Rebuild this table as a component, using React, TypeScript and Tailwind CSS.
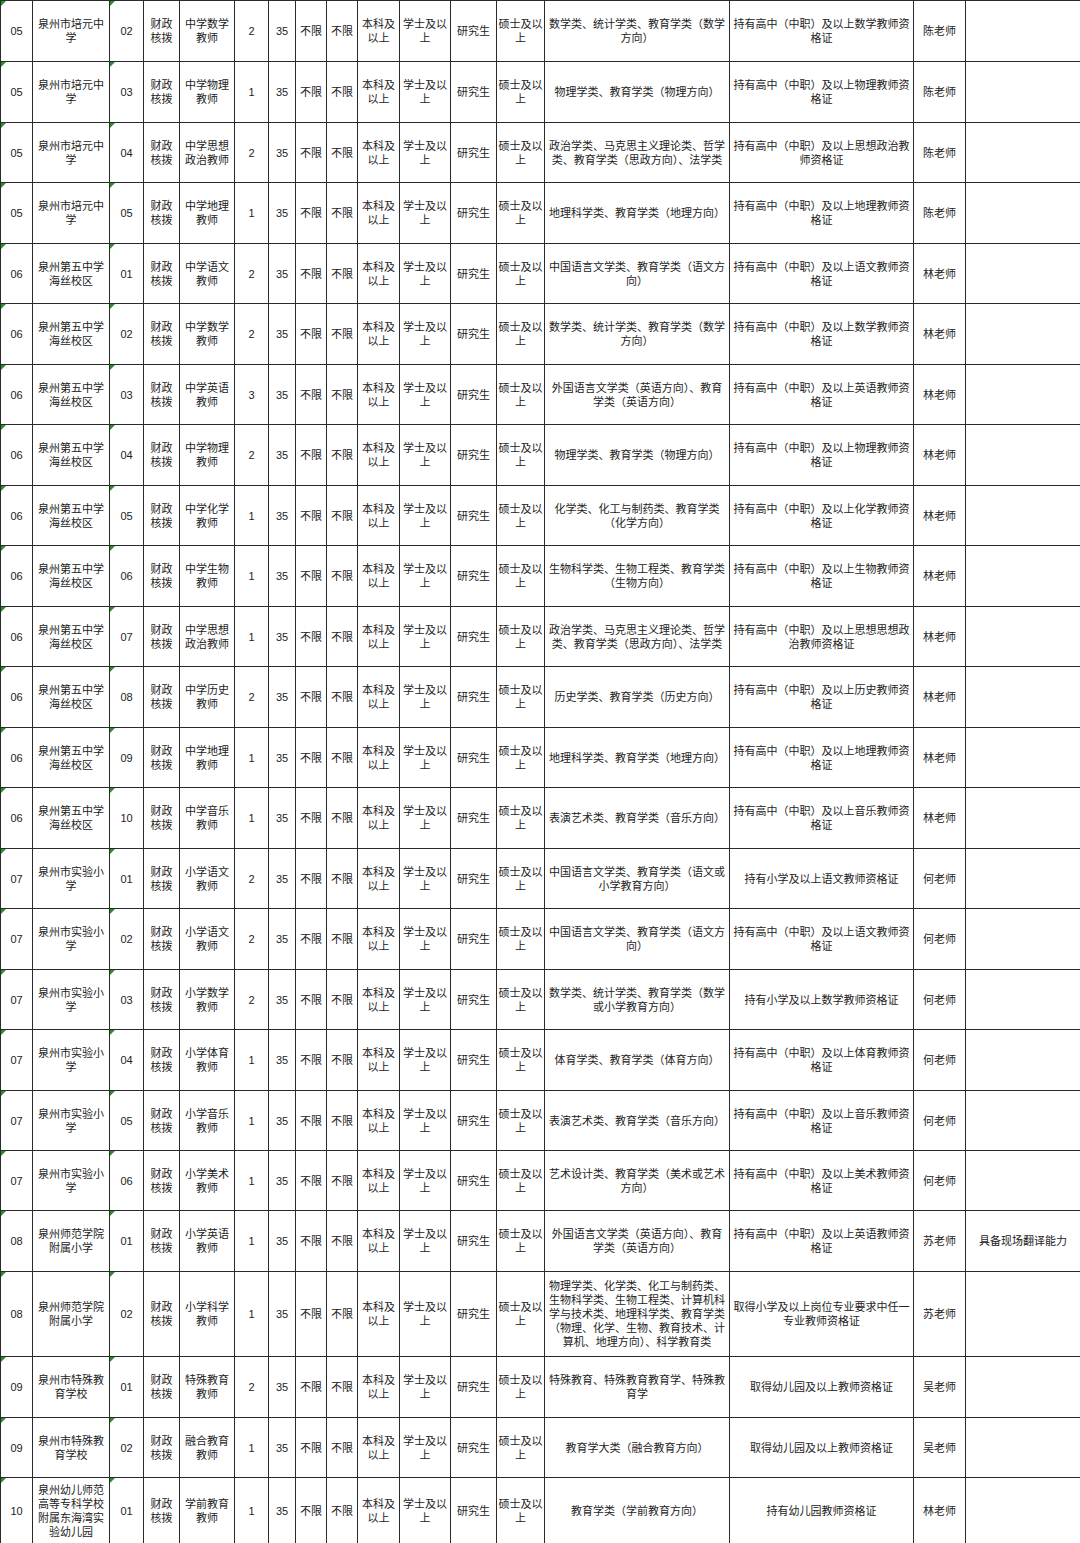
import React from "react";

// column widths, left to right
const COLS = [
  "w-[32px]", "w-[77px]", "w-[34px]", "w-[36px]", "w-[55px]", "w-[34px]",
  "w-[27px]", "w-[31px]", "w-[31px]", "w-[42px]", "w-[51px]", "w-[46px]",
  "w-[48px]", "w-[185px]", "w-[184px]", "w-[52px]", "w-[115px]",
];

const PY = "泉州市培元中\n学";
const WZ = "泉州第五中学\n海丝校区";
const SY = "泉州市实验小\n学";
const SF = "泉州师范学院\n附属小学";
const TS = "泉州市特殊教\n育学校";
const YE = "泉州幼儿师范\n高等专科学校\n附属东海湾实\n验幼儿园";

const gz = (s: string) => `持有高中（中职）及以上${s}教师资\n格证`;

type Row = {
  unit: string;
  name: string;
  code: string;
  post: string;
  count: string;
  major: string;
  cert: string;
  contact: string;
  note?: string;
  h: string;
};

const ROWS: Row[] = [
  { unit: "05", name: PY, code: "02", post: "中学数学\n教师", count: "2", major: "数学类、统计学类、教育学类（数学\n方向）", cert: gz("数学"), contact: "陈老师", h: "h-[61px]" },
  { unit: "05", name: PY, code: "03", post: "中学物理\n教师", count: "1", major: "物理学类、教育学类（物理方向）", cert: gz("物理"), contact: "陈老师", h: "h-[61px]" },
  { unit: "05", name: PY, code: "04", post: "中学思想\n政治教师", count: "2", major: "政治学类、马克思主义理论类、哲学\n类、教育学类（思政方向）、法学类", cert: "持有高中（中职）及以上思想政治教\n师资格证", contact: "陈老师", h: "h-[60px]" },
  { unit: "05", name: PY, code: "05", post: "中学地理\n教师", count: "1", major: "地理科学类、教育学类（地理方向）", cert: gz("地理"), contact: "陈老师", h: "h-[61px]" },
  { unit: "06", name: WZ, code: "01", post: "中学语文\n教师", count: "2", major: "中国语言文学类、教育学类（语文方\n向）", cert: gz("语文"), contact: "林老师", h: "h-[60px]" },
  { unit: "06", name: WZ, code: "02", post: "中学数学\n教师", count: "2", major: "数学类、统计学类、教育学类（数学\n方向）", cert: gz("数学"), contact: "林老师", h: "h-[61px]" },
  { unit: "06", name: WZ, code: "03", post: "中学英语\n教师", count: "3", major: "外国语言文学类（英语方向）、教育\n学类（英语方向）", cert: gz("英语"), contact: "林老师", h: "h-[60px]" },
  { unit: "06", name: WZ, code: "04", post: "中学物理\n教师", count: "2", major: "物理学类、教育学类（物理方向）", cert: gz("物理"), contact: "林老师", h: "h-[61px]" },
  { unit: "06", name: WZ, code: "05", post: "中学化学\n教师", count: "1", major: "化学类、化工与制药类、教育学类\n（化学方向）", cert: gz("化学"), contact: "林老师", h: "h-[60px]" },
  { unit: "06", name: WZ, code: "06", post: "中学生物\n教师", count: "1", major: "生物科学类、生物工程类、教育学类\n（生物方向）", cert: gz("生物"), contact: "林老师", h: "h-[61px]" },
  { unit: "06", name: WZ, code: "07", post: "中学思想\n政治教师", count: "1", major: "政治学类、马克思主义理论类、哲学\n类、教育学类（思政方向）、法学类", cert: "持有高中（中职）及以上思想思想政\n治教师资格证", contact: "林老师", h: "h-[60px]" },
  { unit: "06", name: WZ, code: "08", post: "中学历史\n教师", count: "2", major: "历史学类、教育学类（历史方向）", cert: gz("历史"), contact: "林老师", h: "h-[61px]" },
  { unit: "06", name: WZ, code: "09", post: "中学地理\n教师", count: "1", major: "地理科学类、教育学类（地理方向）", cert: gz("地理"), contact: "林老师", h: "h-[60px]" },
  { unit: "06", name: WZ, code: "10", post: "中学音乐\n教师", count: "1", major: "表演艺术类、教育学类（音乐方向）", cert: gz("音乐"), contact: "林老师", h: "h-[61px]" },
  { unit: "07", name: SY, code: "01", post: "小学语文\n教师", count: "2", major: "中国语言文学类、教育学类（语文或\n小学教育方向）", cert: "持有小学及以上语文教师资格证", contact: "何老师", h: "h-[60px]" },
  { unit: "07", name: SY, code: "02", post: "小学语文\n教师", count: "2", major: "中国语言文学类、教育学类（语文方\n向）", cert: gz("语文"), contact: "何老师", h: "h-[61px]" },
  { unit: "07", name: SY, code: "03", post: "小学数学\n教师", count: "2", major: "数学类、统计学类、教育学类（数学\n或小学教育方向）", cert: "持有小学及以上数学教师资格证", contact: "何老师", h: "h-[60px]" },
  { unit: "07", name: SY, code: "04", post: "小学体育\n教师", count: "1", major: "体育学类、教育学类（体育方向）", cert: gz("体育"), contact: "何老师", h: "h-[61px]" },
  { unit: "07", name: SY, code: "05", post: "小学音乐\n教师", count: "1", major: "表演艺术类、教育学类（音乐方向）", cert: gz("音乐"), contact: "何老师", h: "h-[60px]" },
  { unit: "07", name: SY, code: "06", post: "小学美术\n教师", count: "1", major: "艺术设计类、教育学类（美术或艺术\n方向）", cert: gz("美术"), contact: "何老师", h: "h-[60px]" },
  { unit: "08", name: SF, code: "01", post: "小学英语\n教师", count: "1", major: "外国语言文学类（英语方向）、教育\n学类（英语方向）", cert: gz("英语"), contact: "苏老师", note: "具备现场翻译能力", h: "h-[61px]" },
  { unit: "08", name: SF, code: "02", post: "小学科学\n教师", count: "1", major: "物理学类、化学类、化工与制药类、\n生物科学类、生物工程类、计算机科\n学与技术类、地理科学类、教育学类\n（物理、化学、生物、教育技术、计\n算机、地理方向）、科学教育类", cert: "取得小学及以上岗位专业要求中任一\n专业教师资格证", contact: "苏老师", h: "h-[85px]" },
  { unit: "09", name: TS, code: "01", post: "特殊教育\n教师", count: "2", major: "特殊教育、特殊教育教育学、特殊教\n育学", cert: "取得幼儿园及以上教师资格证", contact: "吴老师", h: "h-[61px]" },
  { unit: "09", name: TS, code: "02", post: "融合教育\n教师", count: "1", major: "教育学大类（融合教育方向）", cert: "取得幼儿园及以上教师资格证", contact: "吴老师", h: "h-[60px]" },
  { unit: "10", name: YE, code: "01", post: "学前教育\n教师", count: "1", major: "教育学类（学前教育方向）", cert: "持有幼儿园教师资格证", contact: "林老师", h: "h-[66px]" },
];

function Cell({ children, flag }: { children?: React.ReactNode; flag?: boolean }) {
  return (
    <td className="relative border border-[#2a2a2a] p-0 text-center align-middle whitespace-pre">
      {flag && (
        <span className="absolute left-0 top-0 h-0 w-0 border-t-[5px] border-r-[5px] border-t-[#2e8b2e] border-r-transparent" />
      )}
      {children}
    </td>
  );
}

export default function App() {
  return (
    <div className="w-[1080px] bg-white">
      <table className="w-[1080px] table-fixed border-collapse text-[11px] leading-[14px] text-[#222] [font-family:'Liberation_Sans','Noto_Sans_CJK_SC',sans-serif]">
        <colgroup>
          {COLS.map((c, i) => (
            <col key={i} className={c} />
          ))}
        </colgroup>
        <tbody>
          {ROWS.map((r, i) => (
            <tr key={i} className={r.h}>
              <Cell flag>{r.unit}</Cell>
              <Cell>{r.name}</Cell>
              <Cell flag>{r.code}</Cell>
              <Cell>{"财政\n核拨"}</Cell>
              <Cell>{r.post}</Cell>
              <Cell>{r.count}</Cell>
              <Cell>35</Cell>
              <Cell>不限</Cell>
              <Cell>不限</Cell>
              <Cell>{"本科及\n以上"}</Cell>
              <Cell>{"学士及以\n上"}</Cell>
              <Cell>研究生</Cell>
              <Cell>{"硕士及以\n上"}</Cell>
              <Cell>{r.major}</Cell>
              <Cell>{r.cert}</Cell>
              <Cell>{r.contact}</Cell>
              <Cell>{r.note}</Cell>
            </tr>
          ))}
        </tbody>
      </table>
    </div>
  );
}
